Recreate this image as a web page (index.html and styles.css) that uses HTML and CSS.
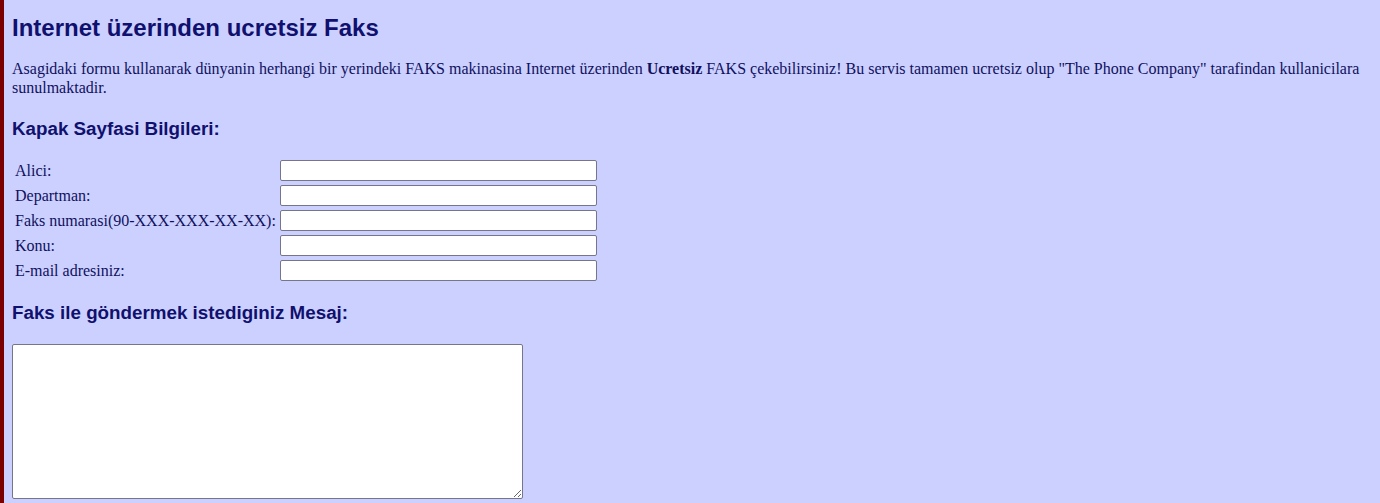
FILE: index.html
```html
<!DOCTYPE html>
<html lang="tr">
<head>
<meta charset="utf-8">
<title>Internet üzerinden ucretsiz Faks</title>
<link rel="stylesheet" href="styles.css">
</head>
<body>
<div class="page">
  <h1 class="title">Internet üzerinden ucretsiz Faks</h1>
  <p class="intro">Asagidaki formu kullanarak dünyanin herhangi bir yerindeki FAKS makinasina Internet üzerinden <b>Ucretsiz</b> FAKS çekebilirsiniz! Bu servis tamamen ucretsiz olup "The Phone Company" tarafindan kullanicilara sunulmaktadir.</p>
  <h2 class="section section-cover">Kapak Sayfasi Bilgileri:</h2>
  <table class="form-table">
    <tr><td class="label">Alici:</td><td><input class="field" type="text"></td></tr>
    <tr><td class="label">Departman:</td><td><input class="field" type="text"></td></tr>
    <tr><td class="label">Faks numarasi(90-XXX-XXX-XX-XX):</td><td><input class="field" type="text"></td></tr>
    <tr><td class="label">Konu:</td><td><input class="field" type="text"></td></tr>
    <tr><td class="label">E-mail adresiniz:</td><td><input class="field" type="text"></td></tr>
  </table>
  <h2 class="section section-message">Faks ile göndermek istediginiz Mesaj:</h2>
  <textarea class="message"></textarea>
</div>
</body>
</html>
```
FILE: styles.css
```css
html {
  background: #ccd0ff;
}
body {
  margin: 0;
  min-height: 503px;
  border-left: 4px solid #7a0000;
  background: #ccd0ff;
  color: #10105e;
  font-family: "Liberation Serif", "Times New Roman", serif;
  font-size: 16px;
}
.page {
  padding: 8px 8px 0 8px;
}
.title {
  font-family: "Liberation Sans", Arial, sans-serif;
  font-size: 24px;
  line-height: 28px;
  font-weight: bold;
  color: #10106e;
  margin: 6px 0 17px 0;
}
.intro {
  margin: 0 0 21px 0;
  line-height: 19px;
}
.section {
  font-family: "Liberation Sans", Arial, sans-serif;
  font-size: 18.8px;
  line-height: 22px;
  font-weight: bold;
  color: #10106e;
  margin: 0;
}
.section-cover {
  margin-bottom: 17px;
}
.section-message {
  margin-bottom: 20px;
}
.form-table {
  border-collapse: separate;
  border-spacing: 2px;
  margin: 0 0 18px 0;
}
.form-table td {
  padding: 1px;
  font-size: 16px;
  color: #10105e;
}
.label {
  white-space: nowrap;
}
.field {
  display: block;
  box-sizing: border-box;
  width: 317px;
  height: 21px;
  margin: 0;
  border: 1px solid #76768a;
  border-radius: 2px;
  background: #fff;
}
.message {
  display: block;
  box-sizing: border-box;
  width: 511px;
  height: 155px;
  margin: 0;
  border: 1px solid #76768a;
  border-radius: 2px;
  background: #fff;
}
```
